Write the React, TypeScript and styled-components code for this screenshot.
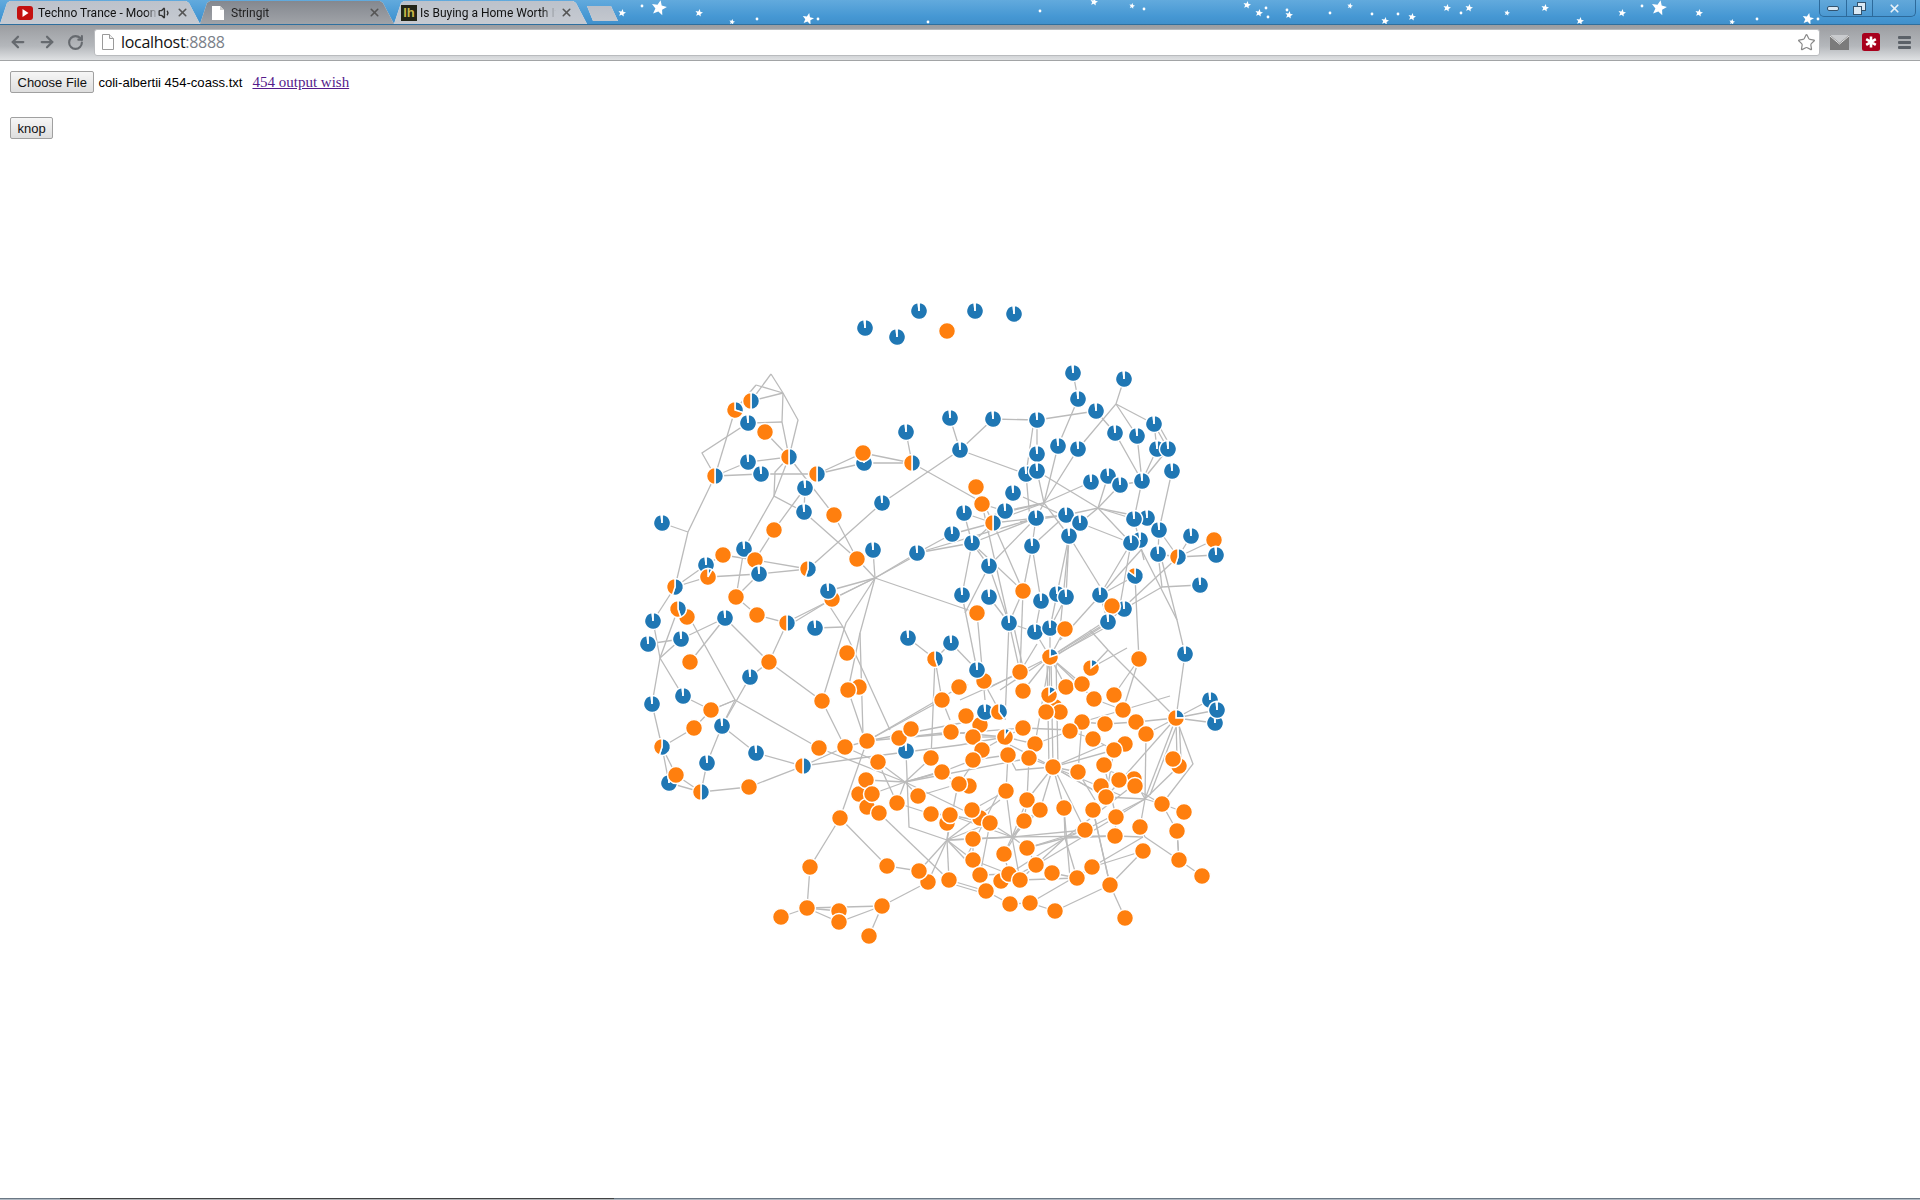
import React, { FC, ReactElement } from "react";
import styled, { createGlobalStyle } from "styled-components";
import { ArrowLeft, ArrowRight, RotateCw, Star, Volume1, X } from "lucide-react";

const BLUE = "#1f77b4";
const ORANGE = "#ff7f0e";
const B = 0.985;
const O = 0;

// x, y, share of blue. Listed bottom to top, the d3 layout overlaps a lot of them.
const nodes: number[][] = [
  [864, 463, B], [832, 599, O], [687, 617, O], [669, 783, B], [1026, 474, B], [1147, 518, B], [1140, 540, B],
  [1057, 594, B], [1124, 609, B], [980, 725, O], [859, 687, O], [859, 794, O], [867, 807, O], [947, 823, O],
  [928, 882, O], [1215, 723, B], [1179, 766, O], [969, 786, O], [1125, 744, O], [980, 818, O], [1001, 881, O],
  [1055, 707, O], [1060, 712, O], [1134, 779, O], [1210, 700, B], [1157, 449, B], [906, 751, B],
  [865, 328, B], [897, 337, B], [919, 311, B], [947, 331, O], [975, 311, B], [1014, 314, B],
  [751, 401, 0.5], [735, 410, 0.3], [748, 423, B], [765, 432, O], [789, 457, 0.5], [748, 462, B], [761, 474, B],
  [715, 476, 0.5], [817, 474, 0.5], [863, 453, O], [912, 463, 0.5], [906, 432, B], [950, 418, B], [960, 450, B],
  [805, 488, B], [804, 512, B], [834, 515, O], [882, 503, B], [662, 523, B], [774, 530, O], [744, 549, B],
  [723, 555, O], [755, 560, O], [706, 565, B], [708, 577, 0.08], [759, 574, B], [808, 569, 0.55], [873, 550, B],
  [857, 559, O], [952, 534, B], [917, 553, B], [675, 587, 0.55], [828, 591, B], [736, 597, O], [962, 595, B],
  [678, 609, 0.45], [653, 621, B], [648, 644, B], [681, 639, B], [690, 662, O], [725, 618, B], [757, 615, O],
  [787, 623, 0.5], [815, 628, B], [769, 662, O], [750, 677, B], [683, 696, B], [652, 704, B], [711, 710, O],
  [694, 728, O], [722, 726, B], [822, 701, O], [847, 653, O], [848, 690, O], [908, 638, B], [935, 659, 0.45],
  [951, 643, B], [942, 700, O], [960, 687, O], [662, 747, 0.55], [756, 753, B], [819, 748, O], [845, 747, O],
  [867, 741, O], [803, 766, 0.5], [899, 738, O], [911, 729, O], [951, 732, O], [931, 758, O], [878, 762, O],
  [942, 772, O], [707, 763, B], [676, 775, O], [701, 792, 0.5], [749, 787, O], [866, 780, O], [872, 794, O],
  [879, 813, O], [897, 803, O], [918, 796, O], [958, 784, O], [931, 814, O], [950, 815, O], [840, 818, O],
  [810, 867, O], [887, 866, O], [919, 871, O], [949, 880, O], [882, 906, O], [807, 908, O], [839, 911, O],
  [839, 922, O], [781, 917, O], [869, 936, O],
  [1073, 373, B], [1124, 379, B], [1078, 399, B], [1096, 411, B], [993, 419, B], [1037, 420, B], [1154, 424, B],
  [1115, 433, B], [1137, 436, B], [1058, 446, B], [1078, 449, B], [1168, 449, B], [1037, 454, B], [1037, 471, B],
  [1172, 471, B], [1142, 481, B], [1091, 482, B], [1108, 476, B], [1120, 485, B], [976, 487, O], [982, 504, O],
  [1013, 493, B], [1005, 511, B], [964, 513, B], [993, 523, 0.5], [1036, 518, B], [1066, 515, B], [1080, 523, B],
  [1134, 519, B], [1159, 530, B], [972, 543, B], [1069, 536, B], [1131, 543, B], [1191, 536, B], [1214, 540, O],
  [1158, 554, B], [1178, 557, 0.55], [1216, 555, B], [1032, 546, B], [989, 566, B], [1135, 576, 0.85], [1200, 585, B],
  [989, 597, B], [1023, 591, O], [1041, 601, B], [1066, 597, B], [1100, 595, B], [1112, 606, O], [977, 613, O],
  [1009, 623, B], [1108, 622, B], [1035, 632, B], [1050, 628, B], [1065, 629, O], [1050, 657, 0.2], [1185, 654, B],
  [1139, 659, O], [1091, 668, 0.15], [984, 681, O], [977, 670, B], [1020, 672, O], [959, 687, O], [1023, 691, O],
  [1066, 687, O], [1082, 684, O], [1049, 695, 0.15], [1114, 695, O], [1094, 699, O], [1217, 710, B],
  [1176, 718, 0.25], [1123, 710, O], [1046, 712, O], [985, 712, B], [999, 712, 0.4], [966, 716, O], [1082, 722, O],
  [1105, 724, O], [1136, 722, O], [1146, 734, O], [973, 737, O], [1005, 737, 0.1], [1023, 728, O], [1070, 731, O],
  [1093, 739, O], [1114, 750, O], [1035, 744, O], [982, 750, O], [1008, 755, O], [973, 760, O], [1029, 758, O],
  [1053, 767, O], [1078, 772, O], [1104, 765, O], [1173, 759, O], [959, 784, O], [1006, 791, O], [1101, 786, O],
  [1119, 780, O], [1135, 786, O], [1106, 797, O], [1027, 800, O], [1040, 810, O], [1064, 808, O], [1093, 810, O],
  [1162, 804, O], [1184, 812, O], [1116, 817, O], [1140, 827, O], [1177, 831, O], [972, 810, O], [990, 823, O],
  [1024, 821, O], [1085, 830, O], [1115, 836, O], [973, 839, O], [1027, 848, O], [1004, 854, O], [1143, 851, O],
  [1179, 860, O], [1202, 876, O], [973, 860, O], [1036, 865, O], [1052, 873, O], [1092, 867, O], [980, 875, O],
  [1009, 874, O], [1020, 880, O], [1077, 878, O], [1110, 885, O], [986, 891, O], [1010, 904, O], [1030, 903, O],
  [1055, 911, O], [1125, 918, O],
];

// polylines as x,y,x,y... the corners without a node are the hidden nodes of the layout
const links: number[][] = [
  [771, 374, 783, 393, 798, 420, 789, 457], [771, 374, 754, 397], [756, 385, 783, 393], [756, 385, 735, 410],
  [783, 393, 751, 401], [783, 393, 782, 422, 789, 457], [782, 422, 748, 423, 702, 453, 715, 476], [735, 410, 715, 476],
  [715, 476, 748, 462], [715, 476, 761, 474, 817, 474], [789, 457, 748, 462], [789, 457, 765, 432],
  [789, 457, 775, 472, 774, 496, 804, 512], [789, 457, 774, 496, 744, 549], [805, 488, 774, 530, 755, 560], [805, 488, 804, 512],
  [789, 457, 834, 515, 857, 559], [817, 474, 864, 463, 912, 463], [817, 474, 863, 453, 912, 463], [906, 432, 912, 463],
  [912, 463, 978, 500], [950, 418, 960, 450, 882, 503, 808, 569], [715, 476, 688, 532, 675, 587], [662, 523, 688, 532],
  [675, 587, 706, 565, 723, 555, 755, 560, 808, 569], [675, 587, 708, 577, 759, 574, 808, 569], [653, 621, 675, 587],
  [736, 597, 744, 549], [736, 597, 759, 574], [736, 597, 757, 615, 787, 623], [804, 512, 857, 559], [805, 488, 817, 474],
  [873, 550, 875, 578],
  [875, 578, 917, 553], [875, 578, 915, 556], [875, 578, 857, 559], [875, 578, 828, 591], [875, 578, 789, 621],
  [875, 578, 832, 599, 791, 624], [875, 578, 846, 623, 822, 701], [875, 578, 860, 633, 863, 735], [875, 578, 977, 613],
  [823, 596, 843, 627, 890, 730], [815, 628, 843, 627], [860, 633, 848, 690, 865, 740],
  [725, 618, 681, 639, 660, 658], [648, 644, 681, 639], [725, 618, 690, 662], [725, 618, 769, 662],
  [678, 609, 660, 658, 652, 704, 662, 747], [653, 621, 660, 658], [660, 658, 683, 696, 711, 710],
  [787, 623, 769, 662], [769, 662, 750, 677, 722, 726, 707, 763], [769, 662, 822, 701, 845, 747],
  [722, 726, 756, 753, 803, 766, 749, 787, 701, 792, 707, 763], [701, 792, 669, 783, 662, 747], [676, 775, 662, 747],
  [676, 775, 701, 792], [662, 747, 694, 728, 711, 710, 735, 700, 692, 622], [711, 710, 733, 701], [735, 700, 722, 726],
  [735, 700, 819, 748, 905, 782], [803, 766, 845, 747, 867, 741], [803, 766, 860, 758, 960, 745], [867, 741, 942, 700],
  [867, 741, 899, 738], [867, 741, 960, 687], [845, 747, 878, 762], [840, 818, 867, 741], [840, 818, 810, 867, 807, 908],
  [840, 818, 887, 866, 919, 871], [807, 908, 781, 917], [807, 908, 882, 906], [807, 908, 839, 911], [807, 908, 839, 922, 882, 906],
  [882, 906, 869, 936], [882, 906, 928, 882], [879, 813, 949, 880], [899, 738, 951, 732],
  [905, 782, 878, 762], [905, 782, 866, 780], [905, 782, 872, 794], [905, 782, 931, 758], [905, 782, 942, 772],
  [905, 782, 945, 770], [905, 782, 897, 803], [905, 782, 918, 796], [905, 782, 975, 816], [905, 782, 1020, 760],
  [906, 751, 909, 827, 947, 840], [947, 840, 919, 871], [947, 840, 928, 882], [947, 840, 949, 880], [947, 840, 973, 839],
  [947, 840, 973, 860], [947, 840, 980, 875], [947, 840, 958, 784], [947, 840, 990, 823],
  [947, 840, 1000, 800], [947, 840, 950, 815], [947, 840, 1012, 837],
  [935, 659, 933, 710, 931, 758], [935, 659, 942, 700], [908, 638, 935, 659], [951, 643, 935, 659], [942, 700, 950, 720],
  [867, 741, 1003, 715], [899, 738, 1023, 728], [950, 732, 1005, 737],
  // upper right
  [1073, 373, 1078, 399, 1058, 446, 1044, 503], [1096, 411, 1037, 420, 993, 419, 960, 450], [1124, 379, 1116, 404, 1078, 449, 1044, 503],
  [1116, 404, 1137, 436, 1142, 481], [1116, 404, 1154, 424], [1096, 411, 1115, 433, 1142, 481], [1154, 424, 1168, 449],
  [1158, 424, 1172, 449], [1154, 424, 1157, 449, 1142, 481], [1168, 449, 1142, 481], [1172, 471, 1159, 530], [1142, 481, 1120, 485],
  [1142, 481, 1134, 519], [1037, 420, 1037, 454], [1034, 420, 1026, 474, 1030, 520], [960, 450, 1026, 474], [1037, 471, 1044, 503, 1036, 518],
  [1044, 503, 1091, 482], [1044, 503, 1005, 511], [1044, 503, 1008, 516], [1044, 503, 993, 515], [1037, 471, 1098, 508, 1131, 543],
  [1108, 476, 1098, 508, 1080, 523], [1120, 485, 1098, 508], [1098, 508, 1066, 515, 1020, 522], [1098, 508, 1134, 519], [1098, 508, 1147, 518],
  [1023, 497, 1073, 520], [1069, 536, 1044, 503], [1036, 518, 1066, 515], [1080, 523, 1131, 543], [1036, 518, 993, 523], [993, 523, 972, 543],
  [993, 523, 964, 513], [952, 534, 993, 523], [1005, 511, 982, 504], [993, 523, 976, 487], [972, 543, 1036, 518], [964, 513, 972, 543],
  [972, 543, 962, 595], [972, 543, 989, 566, 1009, 623], [989, 566, 1036, 518], [1032, 546, 1036, 518], [1032, 546, 1041, 601],
  [1032, 546, 1023, 591], [1032, 546, 1066, 515], [993, 523, 1023, 591], [989, 566, 965, 613], [962, 595, 977, 670], [989, 597, 1009, 623],
  [982, 504, 1009, 623], [1023, 591, 1009, 623], [1069, 536, 1057, 594], [1069, 536, 1066, 597], [1069, 536, 1060, 630], [1069, 536, 1112, 606],
  [1131, 543, 1100, 595, 1108, 622], [1135, 576, 1100, 595], [1135, 576, 1138, 640, 1139, 659], [1178, 557, 1191, 536], [1178, 557, 1214, 540],
  [1178, 557, 1216, 555], [1178, 557, 1158, 554], [1178, 557, 1108, 622], [1159, 530, 1178, 557], [1159, 530, 1158, 554], [1158, 554, 1162, 587, 1200, 585],
  [1162, 587, 1124, 609], [1140, 547, 1177, 620, 1185, 654], [1160, 553, 1177, 620], [1134, 519, 1144, 560], [1141, 550, 1060, 640], [1131, 543, 1120, 605],
  [917, 553, 952, 534], [917, 553, 972, 543], [917, 553, 1036, 518], [972, 543, 1023, 591], [1041, 601, 1035, 632], [1066, 597, 1050, 628],
  [1057, 594, 1050, 628], [1023, 591, 1020, 672], [1009, 623, 1035, 632],
  // hub of the orange mix
  [1050, 657, 1035, 632], [1050, 657, 1050, 628], [1050, 657, 1065, 629], [1050, 657, 1108, 622], [1052, 657, 1112, 624], [1054, 657, 1116, 618],
  [1050, 657, 1124, 609], [1050, 657, 1020, 672], [1050, 657, 1023, 691], [1047, 657, 1049, 767], [1051, 657, 1053, 767], [1056, 657, 1058, 767],
  [1050, 657, 1049, 695], [1050, 657, 1066, 687], [1050, 657, 1082, 684], [1050, 657, 1000, 690], [1050, 657, 1095, 700], [1050, 657, 1035, 744],
  [1020, 672, 985, 690], [1018, 674, 960, 700], [977, 670, 1000, 712], [951, 643, 977, 670], [1009, 623, 1020, 672], [1013, 623, 1024, 672],
  [1009, 623, 1005, 720], [977, 613, 985, 700], [1037, 644, 1020, 672], [1091, 668, 1127, 648], [1091, 668, 1108, 650], [1108, 650, 1176, 718],
  [1108, 650, 1090, 630], [1185, 654, 1176, 718], [1139, 659, 1123, 710], [1139, 659, 1114, 695], [1176, 718, 1136, 722],
  [1176, 718, 1210, 700], [1176, 718, 1217, 710], [1176, 718, 1215, 723], [1176, 718, 1193, 764, 1162, 804], [1176, 718, 1177, 759], [1179, 718, 1181, 759],
  [1176, 718, 1145, 799], [1178, 722, 1150, 795], [1176, 718, 1106, 797], [1146, 734, 1145, 799], [1123, 710, 1170, 696],
  [1145, 799, 1134, 779], [1145, 799, 1162, 804], [1145, 799, 1106, 797], [1145, 799, 1116, 817], [1145, 799, 1140, 827], [1145, 799, 1085, 830],
  [1145, 837, 1179, 860], [1145, 837, 1140, 827], [1143, 851, 1110, 885], [1179, 860, 1177, 831], [1202, 876, 1179, 860], [1162, 804, 1184, 812],
  [1162, 804, 1177, 831], [1145, 799, 1179, 766], [1110, 885, 1125, 918], [1110, 885, 1055, 911], [1110, 885, 1093, 810], [1143, 837, 1092, 867],
  [1123, 710, 1082, 722], [1082, 722, 1105, 724], [1105, 724, 1136, 722], [1136, 722, 1146, 734], [1114, 750, 1093, 739], [1070, 731, 1093, 739],
  [1070, 731, 1035, 744], [1023, 728, 1070, 730], [1005, 737, 1023, 728], [1005, 737, 1035, 744], [1005, 737, 960, 745], [973, 737, 1005, 737],
  [1082, 722, 1078, 772], [1114, 750, 1053, 767], [1104, 765, 1116, 817], [1114, 750, 1106, 797], [1123, 710, 1094, 699], [1176, 718, 1146, 734],
  // lower mesh
  [1053, 767, 1078, 772], [1053, 767, 1104, 745], [1053, 767, 1027, 800], [1053, 767, 1040, 810], [1053, 767, 1064, 808], [1053, 767, 1029, 758],
  [1053, 767, 1016, 770, 1008, 755], [1053, 767, 1010, 745], [1053, 767, 1093, 790], [1053, 767, 1106, 797], [1053, 767, 1120, 795], [1055, 770, 1085, 830],
  [1008, 755, 1006, 791], [973, 760, 1008, 755], [973, 760, 942, 772], [1029, 758, 1027, 800], [982, 750, 973, 760], [982, 750, 959, 784], [1005, 737, 982, 750],
  [1012, 837, 973, 839], [1012, 837, 1024, 821], [1012, 837, 1004, 854], [1012, 837, 1027, 848], [1012, 837, 1020, 880], [1012, 837, 1006, 791],
  [1012, 837, 1040, 810], [1012, 837, 1027, 800], [1012, 837, 990, 823], [1012, 837, 950, 815], [1012, 837, 1085, 830], [1012, 837, 1115, 836],
  [1065, 838, 1064, 808], [1065, 838, 1085, 830], [1065, 838, 1115, 836], [1065, 838, 1027, 848], [1065, 838, 1077, 878], [1065, 838, 1036, 865],
  [1065, 838, 1140, 780], [1065, 838, 1009, 874], [1093, 810, 1110, 885], [1085, 830, 1027, 848], [1036, 865, 1116, 817],
  [949, 880, 986, 891], [949, 883, 986, 894], [986, 891, 1010, 904, 1030, 903, 1055, 911], [986, 891, 1036, 865], [1030, 903, 1092, 867], [1020, 880, 1077, 878],
  [973, 860, 1009, 874], [980, 875, 1009, 874], [1052, 873, 1036, 865], [1052, 873, 1077, 878], [1092, 867, 1077, 878], [1092, 867, 1143, 851], [1020, 880, 1036, 865],
  [1027, 848, 1036, 865], [1004, 854, 1009, 874], [973, 839, 973, 860], [990, 823, 980, 875], [1024, 821, 1004, 854], [1040, 810, 1024, 821], [1000, 790, 965, 860],
  [1006, 791, 972, 810], [1027, 800, 1024, 821], [1064, 808, 1070, 878], [1177, 831, 1179, 860], [1143, 837, 1115, 836], [1106, 797, 1093, 810], [1116, 817, 1115, 836],
  [1162, 804, 1119, 780], [1134, 779, 1106, 770], [1101, 786, 1106, 797], [1093, 810, 1106, 797], [1078, 772, 1095, 800],
  [931, 814, 950, 815], [897, 803, 931, 814], [918, 796, 958, 784], [878, 762, 897, 803], [942, 772, 958, 784], [972, 810, 990, 823], [950, 815, 990, 823],
];

const pieSlice = (cx: number, cy: number, r: number, from: number, to: number): string => {
  const a0 = from * 2 * Math.PI;
  const a1 = to * 2 * Math.PI;
  const large = to - from > 0.5 ? 1 : 0;
  const x0 = cx + r * Math.sin(a0);
  const y0 = cy - r * Math.cos(a0);
  const x1 = cx + r * Math.sin(a1);
  const y1 = cy - r * Math.cos(a1);
  return `M${cx} ${cy}L${x0} ${y0}A${r} ${r} 0 ${large} 1 ${x1} ${y1}Z`;
};

const stars = [
  [622, 13, 4], [659, 8, 8], [699, 13, 4], [732, 22, 3], [808, 19, 6], [1094, 2, 4], [1132, 6, 3], [1247, 5, 4], [1259, 13, 4],
  [1289, 15, 4], [1350, 6, 3], [1385, 21, 4], [1412, 17, 4], [1447, 8, 4], [1469, 8, 4], [1507, 13, 3], [1545, 8, 4],
  [1580, 21, 4], [1622, 13, 4], [1659, 8, 8], [1699, 13, 4], [1732, 22, 3], [1808, 19, 6],
];
const dots = [
  [642, 6], [757, 19], [818, 19], [928, 22], [1040, 11], [1144, 9], [1266, 8], [1268, 17], [1287, 10], [1330, 13],
  [1372, 14], [1398, 14], [1461, 13], [1642, 6], [1757, 19], [1818, 19],
];

const starPoints = (cx: number, cy: number, r: number): string =>
  Array.from({ length: 10 }, (_, i) => {
    const rad = i % 2 ? r * 0.45 : r;
    const a = (i * Math.PI) / 5 + 0.2;
    return `${(cx + rad * Math.sin(a)).toFixed(1)},${(cy - rad * Math.cos(a)).toFixed(1)}`;
  }).join(" ");

const Graph: FC = (): ReactElement => (
  <GraphSvg viewBox="0 139 1920 1059">
    <g fill="none" stroke="#bbb" strokeWidth="1.3">
      {links.map((l, i) => (
        <polyline key={i} points={l.join(" ")} />
      ))}
    </g>
    <g stroke="#fff" strokeWidth="1.5">
      {nodes.map(([x, y, f], i) =>
        f === O ? (
          <circle key={i} cx={x} cy={y} r={8.5} fill={ORANGE} />
        ) : (
          <g key={i}>
            <path d={pieSlice(x, y, 8.5, 0, f)} fill={BLUE} />
            <path d={pieSlice(x, y, 8.5, f, 1)} fill={ORANGE} />
          </g>
        )
      )}
    </g>
  </GraphSvg>
);

const App: FC = (): ReactElement => {
  return (
    <Shell>
      <GlobalStyle />
      <TitleBar>
        <StarField viewBox="0 0 1920 24">
          <g fill="#fff">
            {stars.map(([x, y, r], i) => (
              <polygon key={i} points={starPoints(x, y, r)} />
            ))}
            {dots.map(([x, y], i) => (
              <circle key={i} cx={x} cy={y} r={1.4} />
            ))}
          </g>
        </StarField>
        <TabStrip>
          <Tab $width={200} $left={17} $right={11}>
            <svg width="16" height="14" viewBox="0 0 16 14">
              <rect width="16" height="14" rx="3" fill="#c4100f" />
              <path d="M5.5 3v8l6-4z" fill="#fff" />
            </svg>
            <TabTitle>Techno Trance - Moon</TabTitle>
            <Volume1 size={14} color="#333" strokeWidth={2.4} />
            <TabClose size={13} strokeWidth={3} />
          </Tab>
          <Tab $width={194} $left={12} $right={13} $active>
            <svg width="12" height="14" viewBox="0 0 12 14">
              <path d="M0 0h8l4 4v10H0z" fill="#fff" />
              <path d="M8 0v4h4z" fill="#ccc" />
            </svg>
            <TabTitle $gap={7}>Stringit</TabTitle>
            <TabClose size={13} strokeWidth={3} />
          </Tab>
          <Tab $width={193} $left={7} $right={14}>
            <LhIcon>lh</LhIcon>
            <TabTitle $gap={3}>Is Buying a Home Worth It</TabTitle>
            <TabClose size={13} strokeWidth={3} />
          </Tab>
          <NewTab />
        </TabStrip>
        <WindowButtons>
          <WinButton $width={26}>
            <svg width="12" height="5" viewBox="0 0 12 5">
              <rect x="0.5" y="0.5" width="11" height="4" rx="1.5" fill="#dbe9f4" stroke="#33536e" />
            </svg>
          </WinButton>
          <WinButton $width={25}>
            <svg width="13" height="13" viewBox="0 0 13 13" fill="#dbe9f4" stroke="#33536e">
              <rect x="4.5" y="0.5" width="8" height="8" />
              <rect x="0.5" y="4.5" width="8" height="8" />
            </svg>
          </WinButton>
          <WinButton $width={42}>
            <X size={13} color="#e8f1f8" strokeWidth={3.2} />
          </WinButton>
        </WindowButtons>
      </TitleBar>
      <Toolbar>
        <NavButton>
          <ArrowLeft size={18} strokeWidth={3} />
        </NavButton>
        <NavButton>
          <ArrowRight size={18} strokeWidth={3} />
        </NavButton>
        <NavButton>
          <RotateCw size={17} strokeWidth={3} />
        </NavButton>
        <Omnibox>
          <svg width="12" height="16" viewBox="0 0 12 16">
            <path d="M.5.5h7l4 4v11H.5z" fill="#fff" stroke="#9a9a9a" />
            <path d="M7.5.5v4h4" fill="#eee" stroke="#9a9a9a" />
          </svg>
          <UrlHost>
            localhost<UrlPort>:8888</UrlPort>
          </UrlHost>
          <Star size={19} color="#888" strokeWidth={1.5} />
        </Omnibox>
        <ExtIcons>
          <svg width="19" height="15" viewBox="0 0 19 15">
            <rect width="19" height="15" fill="#7b7b7b" />
            <path d="M0 0l9.5 8L19 0" fill="#c9cbce" />
            <path d="M0 1l9.5 8L19 1" fill="none" stroke="#e6e6e6" />
          </svg>
          <svg width="18" height="18" viewBox="0 0 18 18">
            <rect width="18" height="18" rx="2.5" fill="#a8001c" />
            <path d="M9 3.5v11M4.2 6.2l9.6 5.6M13.8 6.2l-9.6 5.6" stroke="#fff" strokeWidth="2.6" />
          </svg>
          <MenuBars>
            <MenuBar />
            <MenuBar />
            <MenuBar />
          </MenuBars>
        </ExtIcons>
      </Toolbar>
      <Page>
        <Controls>
          <FileRow>
            <PlainButton type="button">Choose File</PlainButton>
            <FileName>coli-albertii 454-coass.txt</FileName>
            <OutputLink href="#">454 output wish</OutputLink>
          </FileRow>
          <PlainButton type="button">knop</PlainButton>
        </Controls>
        <Graph />
      </Page>
      <Taskbar>
        <TaskSegment $width={60} $light />
        <TaskSegment $width={554} />
        <TaskSegment $width={1306} $light />
      </Taskbar>
    </Shell>
  );
};

export default App;

const GlobalStyle = createGlobalStyle`
  html, body {
    margin: 0;
    padding: 0;
    background: #fff;
  }
`;

const Shell = styled.div`
  display: flex;
  flex-direction: column;
  width: 1920px;
  height: 1200px;
  overflow: hidden;
`;

const TitleBar = styled.div`
  position: relative;
  display: flex;
  justify-content: space-between;
  align-items: flex-start;
  height: 24px;
  flex: none;
  background: linear-gradient(#62aadd, #4597d3 70%, #4190cb);
  border-bottom: 1px solid #2f6f9e;
`;

const StarField = styled.svg`
  position: absolute;
  left: 0;
  top: 0;
  width: 1920px;
  height: 24px;
`;

const TabStrip = styled.div`
  position: relative;
  display: flex;
  align-items: flex-end;
  height: 24px;
  filter: drop-shadow(0 0 0.6px #e9eef3);
`;

const Tab = styled.div<{ $width: number; $left: number; $right: number; $active?: boolean }>`
  display: flex;
  align-items: center;
  box-sizing: border-box;
  width: ${(p) => p.$width}px;
  height: 23px;
  padding: 0 ${(p) => p.$right}px 0 ${(p) => p.$left}px;
  background: ${(p) =>
    p.$active ? "linear-gradient(#84888f, #a0a3a8)" : "linear-gradient(#bcc2cb, #c6cad1)"};
  clip-path: polygon(0 100%, 7px 2px, 10px 0, calc(100% - 14px) 0, calc(100% - 11px) 2px, 100% 100%);
  color: ${(p) => (p.$active ? "#222" : "#111")};
  font: 12px Roboto, sans-serif;
`;

const TabTitle = styled.span<{ $gap?: number }>`
  flex: 1;
  min-width: 0;
  margin-left: ${(p) => p.$gap ?? 5}px;
  white-space: nowrap;
  -webkit-mask-image: linear-gradient(to right, #000 90%, transparent);
  mask-image: linear-gradient(to right, #000 90%, transparent);
`;

const TabClose = styled(X)`
  flex: none;
  margin-left: 4px;
  color: #555;
`;

const LhIcon = styled.span`
  flex: none;
  width: 16px;
  height: 16px;
  background: #222417;
  color: #c8b94a;
  font: bold 13px/15px "Liberation Sans", sans-serif;
  text-align: center;
`;

const NewTab = styled.div`
  width: 31px;
  height: 15px;
  margin: 0 0 3px 0;
  background: linear-gradient(#b9bfc8, #c3c7ce);
  clip-path: polygon(0 0, 24px 0, 100% 100%, 6px 100%);
`;

const WindowButtons = styled.div`
  position: relative;
  display: flex;
  height: 16px;
  margin-right: 4px;
  background: linear-gradient(#62a8da, #4a98d2);
  border: 1px solid #2d6a9b;
  border-top: none;
  border-radius: 0 0 5px 5px;
`;

const WinButton = styled.div<{ $width: number }>`
  display: flex;
  align-items: center;
  justify-content: center;
  width: ${(p) => p.$width}px;
  & + & {
    border-left: 1px solid #2d6a9b;
  }
`;

const Toolbar = styled.div`
  display: flex;
  align-items: center;
  flex: none;
  box-sizing: border-box;
  height: 36px;
  padding: 0 9px 1px 4px;
  background: linear-gradient(#9b9da1, #b4b7bb 60%, #dfe1e3);
  border-bottom: 1px solid #a2a4a6;
`;

const NavButton = styled.div`
  display: flex;
  align-items: center;
  justify-content: center;
  width: 29px;
  height: 26px;
  color: #666a6f;
`;

const Omnibox = styled.div`
  display: flex;
  align-items: center;
  flex: none;
  box-sizing: border-box;
  width: 1726px;
  height: 27px;
  margin-left: 4px;
  padding: 0 3px 0 7px;
  background: #fff;
  border: 1px solid #b9bbbe;
  border-radius: 3px;
`;

const UrlHost = styled.span`
  flex: 1;
  margin-left: 7px;
  color: #111;
  font: 16px "Open Sans", sans-serif;
  letter-spacing: -0.3px;
`;

const UrlPort = styled.span`
  color: #7a8088;
`;

const ExtIcons = styled.div`
  display: flex;
  align-items: center;
  gap: 13px;
  margin-left: 10px;
`;

const MenuBars = styled.div`
  display: flex;
  flex-direction: column;
  gap: 2px;
  margin-left: 5px;
`;

const MenuBar = styled.div`
  width: 13px;
  height: 3px;
  background: #5b6168;
  border-radius: 1px;
`;

const Page = styled.div`
  flex: 1;
  min-height: 0;
  background: #fff;
`;

const Controls = styled.div`
  display: flex;
  flex-direction: column;
  align-items: flex-start;
  gap: 24px;
  padding: 10px 0 0 10px;
`;

const FileRow = styled.div`
  display: flex;
  align-items: center;
  height: 22px;
`;

const PlainButton = styled.button`
  box-sizing: border-box;
  height: 22px;
  padding: 0 6.5px;
  background: linear-gradient(#f6f6f6, #dedede);
  border: 1px solid #a0a0a0;
  border-radius: 2px;
  color: #111;
  font: 13px "Liberation Sans", sans-serif;
`;

const FileName = styled.span`
  margin-left: 4px;
  color: #000;
  font: 13.1px "Liberation Sans", sans-serif;
`;

const OutputLink = styled.a`
  margin-left: 10px;
  color: #551a8b;
  font: 15px "Liberation Serif", serif;
`;

const GraphSvg = styled.svg`
  display: block;
  width: 1920px;
  height: 1059px;
`;

const Taskbar = styled.div`
  display: flex;
  flex: none;
  height: 2px;
`;

const TaskSegment = styled.div<{ $width: number; $light?: boolean }>`
  width: ${(p) => p.$width}px;
  background: ${(p) => (p.$light ? "linear-gradient(#4a5866, #cfd8e0)" : "linear-gradient(#0a0a0a, #e6ecef)")};
`;
